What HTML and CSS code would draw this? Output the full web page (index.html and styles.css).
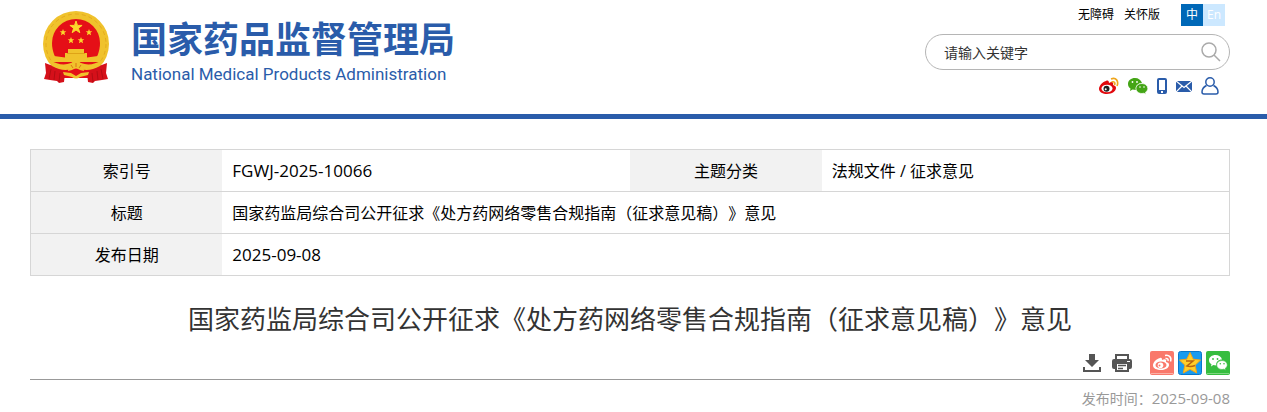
FILE: index.html
```html
<!DOCTYPE html>
<html lang="zh-CN">
  <head>
    <meta charset="utf-8">
    <meta name="viewport" content="width=device-width,initial-scale=1">
    <title>国家药监局综合司公开征求《处方药网络零售合规指南（征求意见稿）》意见</title>
    <link rel="stylesheet" href="styles.css">
  </head>
  <body>
    <header class="header">
      <div class="wrap header-inner">
        <a class="logo" href="#">
          <svg class="emblem" viewBox="0 0 66 72" aria-hidden="true">
            <circle cx="33" cy="33" r="33" fill="#f0c22c"/>
            <circle cx="33" cy="33" r="30" fill="none" stroke="#dfa51c" stroke-width=".8" stroke-dasharray="4 3"/>
            <path d="M33 8a24 24 0 0 1 24 24c0 8-3 15-7 20H16c-4-5-7-12-7-20A24 24 0 0 1 33 8z" fill="#e50f17"/>
            <path d="M33 10l1.500 4.400h4.600l-3.700 2.800 1.400 4.500-3.800-2.700-3.800 2.700 1.400-4.500-3.700-2.800h4.600z" fill="#fbd72b" stroke="#fbd72b"/>
            <g fill="#fbd72b">
              <path id="star" d="M20 18l.9 2.200 2.400.1-1.900 1.500.7 2.400-2.100-1.300-2.100 1.300.7-2.400-1.900-1.500 2.400-.1z"/>
              <use href="#star" x="26"/>
              <use href="#star" x="8" y="8"/>
              <use href="#star" x="18" y="8"/>
            </g>
            <path d="M25 38h16v4h3v5H22v-5h3z" fill="#f0c22c"/>
            <path d="M24 42.500h18" stroke="#d99a12" stroke-width=".8"/>
            <path d="M11 45q22 4 44 0l2 7H9z" fill="#f0c22c"/>
            <path d="M9 51h48v13l-10 3H19L9 64z" fill="#e50f17"/>
            <path d="M2 52l8 3 8 4 4 3-1 9-5 1-2-2-7-1-6-1 2-6zM64 52l-8 3-8 4-4 3 1 9 5 1 2-2 7-1 6-1-2-6z" fill="#d5101a"/>
            <path d="M7 49q11 7 21 3l5-3 5 3q10 4 21-3l-2 6q-11 6-19 3l-5-2-5 2q-8 3-19-3z" fill="#f0c22c"/>
            <path d="M25 60q0-9 8-9t8 9l-4-1q-4-3-8 0z" fill="#f0c22c"/>
            <path d="M30 57l-2-3M33 56v-4M36 57l2-3" stroke="#d9600f" stroke-width=".8"/>
            <path d="M20 61l8 1 5 3 5-3 8-1-1 3-8 2q-4 3-8 0l-8-2z" fill="#f0c22c"/>
            <path d="M8 58l-2 10M12 60l-1 9M17 62l-1 9M58 58l2 10M54 60l1 9M49 62l1 9" stroke="#a90b12" stroke-width=".8"/>
          </svg>
          <span class="logo-text">
            <span class="logo-cn">国家药品监督管理局</span>
            <span class="logo-en">National Medical Products Administration</span>
          </span>
        </a>
        <div class="tools">
          <nav class="top-links">
            <a href="#">无障碍</a>
            <a href="#">关怀版</a>
            <span class="lang"><a class="cn" href="#">中</a><a class="en" href="#">En</a></span>
          </nav>
          <form class="search">
            <input type="text" aria-label="请输入关键字" placeholder="请输入关键字">
            <button type="button" aria-label="搜索">
              <svg width="20" height="20" viewBox="0 0 20 20"><circle cx="8" cy="8" r="7" fill="none" stroke="#aaa" stroke-width="1.500"/><path d="M13 13l6 6" stroke="#aaa" stroke-width="1.500"/></svg>
            </button>
          </form>
          <div class="links">
            <a href="#" aria-label="微博">
              <svg width="20" height="18" viewBox="0 0 20 18">
                <path d="M7 4C3 5 0 9 0 12c0 3 4 5 8 5 5 0 9-3 9-6 0-2-1-2-3-3 1-3-1-4-4-2 0-2-1-3-3-2z" fill="#e1080d"/>
                <ellipse cx="8" cy="11.500" rx="5.500" ry="3.800" fill="#fff"/>
                <circle cx="7.500" cy="11.800" r="3" fill="#222"/><circle cx="6.700" cy="12.200" r="1" fill="#fff"/>
                <path d="M12 2c5-2 8 2 6 7M12.500 5c3-1 4 1 3 3" fill="none" stroke="#efa51b" stroke-width="1.600"/>
              </svg>
            </a>
            <a href="#" aria-label="微信">
              <svg width="20" height="18" viewBox="0 0 20 18">
                <path d="M7 1C3 1 0 3.500 0 7c0 2 1 3.500 2.500 4.500L2 14l2.500-1.500L8 13c-1-4 2-7 6-7-1-3-3.500-5-7-5z" fill="#44a516"/>
                <path d="M14 6.500c-3.500 0-6 2.200-6 5s2.500 5 6 5l2-.3 2 1-.5-2c1.500-1 2.300-2.200 2.300-3.700 0-2.800-2.500-5-5.800-5z" fill="#44a516" stroke="#fff" stroke-width=".7"/>
                <g fill="#fff"><circle cx="4.500" cy="5" r=".9"/><circle cx="9" cy="5" r=".9"/><circle cx="12" cy="10" r=".8"/><circle cx="16" cy="10" r=".8"/></g>
              </svg>
            </a>
            <a href="#" aria-label="手机">
              <svg width="10" height="18" viewBox="0 0 10 18"><path d="M2 1h6a2 2 0 0 1 2 2v12a2 2 0 0 1-2 2H2a2 2 0 0 1-2-2V3a2 2 0 0 1 2-2zm0 2v10h6V3zm2 11v2h2v-2z" fill="#2a5caa" fill-rule="evenodd"/></svg>
            </a>
            <a href="#" aria-label="邮箱">
              <svg width="16" height="18" viewBox="0 0 16 18"><path d="M0 4h16v11H0z" fill="#2a5caa"/><path d="M0 4l8 6.500L16 4M0 15l6-6M16 15l-6-6" fill="none" stroke="#fff" stroke-width="1.200"/></svg>
            </a>
            <a class="user" href="#" aria-label="个人中心">
              <svg width="18" height="18" viewBox="0 0 18 18"><circle cx="9" cy="5" r="4.200"/><path d="M5.500 8.500C2.500 10 1 12.500 1 15q0 2 2 2h12q2 0 2-2c0-2.500-1.500-5-4.500-6.500"/></svg>
            </a>
          </div>
        </div>
      </div>
    </header>
    <main class="wrap">
      <table class="info">
        <colgroup><col class="c-label"><col class="c-value"><col class="c-label"><col></colgroup>
        <tr>
          <th scope="row">索引号</th>
          <td class="num">FGWJ-2025-10066</td>
          <th scope="row">主题分类</th>
          <td>法规文件 / 征求意见</td>
        </tr>
        <tr>
          <th scope="row">标题</th>
          <td colspan="3">国家药监局综合司公开征求《处方药网络零售合规指南（征求意见稿）》意见</td>
        </tr>
        <tr>
          <th scope="row">发布日期</th>
          <td class="num" colspan="3">2025-09-08</td>
        </tr>
      </table>
      <h1>国家药监局综合司公开征求《处方药网络零售合规指南（征求意见稿）》意见</h1>
      <div class="share">
        <button type="button" aria-label="下载">
          <svg width="20" height="20" viewBox="0 0 20 20"><path d="M7 1h6v6h4l-7 7-7-7h4zM1 14h2v3h14v-3h2v5H1z" fill="#555"/></svg>
        </button>
        <button type="button" aria-label="打印">
          <svg width="20" height="20" viewBox="0 0 20 20"><path d="M3 1h14v5H3z" fill="#555"/><path d="M5 3h10v3H5z" fill="#fff"/><path d="M2 6h16q2 0 2 2v6q0 2-2 2h-1v3H3v-3H2q-2 0-2-2V8q0-2 2-2z" fill="#555"/><path d="M5 11h10v6H5z" fill="#fff"/><path d="M6 12.500h8M6 15.500h5" stroke="#555" stroke-width="1.300"/><path d="M15 8.500h3" stroke="#fff"/></svg>
        </button>
        <button class="first" type="button" aria-label="分享到微博">
          <svg width="24" height="24" viewBox="0 0 24 24">
            <rect width="24" height="24" rx="2" fill="#f9786b"/><path d="M1 22.500h22" stroke="#fbb0a6"/>
            <path d="M10 7c-4 1-7 4.500-7 7.500s4 4.500 8 4.500c5 0 8-2.500 8-5 0-2-1-2.500-3-3 1-2.500-1-3.500-4-2 0-2-.5-2.500-2-2z" fill="#fff"/>
            <ellipse cx="11" cy="14" rx="5.500" ry="3.600" fill="#f9786b"/><circle cx="10.500" cy="14.200" r="2.800" fill="#fff"/><circle cx="9.500" cy="14.600" r="1" fill="#f9786b"/>
            <path d="M15 4.500c4-1 7 2 5.500 6M15.500 7.500c2-.5 3 1 2.500 2.500" fill="none" stroke="#fff" stroke-width="1.500"/>
          </svg>
        </button>
        <button type="button" aria-label="分享到QQ空间">
          <svg width="24" height="24" viewBox="0 0 24 24">
            <rect x=".5" y=".5" width="23" height="23" rx="2" fill="#189bf0" stroke="#0877ca"/>
            <path d="M12 1.500l3.200 6.700 7.300.9-5.400 5.100L18.700 22 12 18.300 5.300 22l1.600-7.800L1.500 9.100l7.300-.9z" fill="#ffce29" stroke="#f3a51a" stroke-linejoin="round"/>
            <path d="M8 10h7l-6 5q4 1 8-.5" fill="none" stroke="#b86412" stroke-width="1.500"/>
          </svg>
        </button>
        <button type="button" aria-label="分享到微信">
          <svg width="24" height="24" viewBox="0 0 24 24">
            <rect width="24" height="24" rx="2" fill="#36bd3f"/><path d="M1 22.500h22" stroke="#7ed681"/>
            <path d="M9.500 4C6 4 3 6.200 3 9.200c0 1.800 1 3.200 2.500 4.100L5 15.500 7.300 14l3 .4c-.5-3.500 2-6 5.700-6C15.300 5.800 12.700 4 9.500 4z" fill="#fff"/>
            <path d="M16 9.500c-3 0-5.300 2-5.300 4.500s2.300 4.500 5.300 4.500l1.800-.3 1.900 1-.4-1.900c1.300-.8 2-2 2-3.300 0-2.500-2.300-4.500-5.300-4.500z" fill="#fff" stroke="#36bd3f" stroke-width=".6"/>
            <g fill="#36bd3f"><circle cx="7" cy="8" r=".9"/><circle cx="11.500" cy="8" r=".9"/><circle cx="14.300" cy="12.700" r=".8"/><circle cx="18" cy="12.700" r=".8"/></g>
          </svg>
        </button>
      </div>
      <p class="date">发布时间：<span>2025-09-08</span></p>
    </main>
  </body>
</html>
```
FILE: styles.css
```css
* {
  margin: 0;
  padding: 0;
  box-sizing: border-box;
}
body {
  background: #fff;
  color: #000;
  font-family: "Open Sans", "Noto Sans CJK SC", sans-serif;
  font-size: 16px;
  text-spacing-trim: space-all;
}
a {
  color: inherit;
  text-decoration: none;
}
button {
  border: 0;
  background: none;
  cursor: pointer;
}
svg {
  display: block;
}
.wrap {
  margin: 0 37px 0 30px;
}
.header {
  border-bottom: 5px solid #2a5caa;
}
.header-inner {
  display: flex;
  justify-content: space-between;
  min-height: 114px;
}
.logo {
  display: flex;
  align-items: flex-start;
  gap: 22px;
  padding: 11px 0 0 13px;
  color: #2a5caa;
}
.emblem {
  width: 66px;
  height: 72px;
}
.logo-text {
  display: flex;
  flex-direction: column;
  padding-top: 9px;
  white-space: nowrap;
}
.logo-cn {
  font-family: "Liberation Sans", "Noto Sans CJK SC", sans-serif;
  font-size: 36px;
  font-weight: bold;
  line-height: 42px;
}
.logo-en {
  font-family: Roboto, sans-serif;
  font-size: 17px;
  line-height: 24px;
}
.tools {
  width: 305px;
  padding-top: 4px;
}
.top-links {
  display: flex;
  justify-content: flex-end;
  gap: 10px;
  padding-right: 5px;
  font-size: 12px;
  line-height: 22px;
}
.lang {
  display: flex;
  margin-left: 11px;
  color: #fff;
  text-align: center;
}
.lang a {
  width: 22px;
}
.cn {
  background: #0068b7;
}
.en {
  background: #cce8ff;
}
.search {
  display: flex;
  align-items: center;
  height: 36px;
  margin-top: 8px;
  padding: 0 8px 0 18px;
  border: 1px solid #b5b5b5;
  border-radius: 18px;
}
.search input {
  flex: 1;
  min-width: 0;
  border: 0;
  outline: none;
  background: none;
  font: inherit;
  font-size: 14px;
}
.search input::placeholder {
  color: #333;
}
.links {
  display: flex;
  justify-content: flex-end;
  gap: 9px;
  margin-top: 7px;
  padding-right: 11px;
}
.user {
  fill: none;
  stroke: #2a5caa;
  stroke-width: 1.5;
}
.info {
  width: 100%;
  margin-top: 30px;
  table-layout: fixed;
  border-collapse: collapse;
  border: 1px solid #d6d6d6;
}
.c-label {
  width: 16%;
}
.c-value {
  width: 34%;
}
.info tr {
  height: 42px;
  border-bottom: 1px solid #d6d6d6;
}
.info th {
  background: #f2f2f2;
  font-weight: normal;
}
.info td {
  padding: 0 10px;
}
.info th, .info td {
  line-height: 24px;
}
.info .num {
  font-size: 17px;
}
h1 {
  margin-top: 23px;
  color: #333;
  font-size: 26px;
  font-weight: normal;
  line-height: 40px;
  text-align: center;
}
.share {
  display: flex;
  justify-content: flex-end;
  align-items: center;
  gap: 4px;
  margin-top: 12px;
  padding-bottom: 4px;
  border-bottom: 1px solid #999;
}
.share button:first-child {
  margin-right: 6px;
}
.share .first {
  margin-left: 14px;
}
.date {
  margin-top: 7px;
  color: #999;
  font-size: 14px;
  line-height: 22px;
  text-align: right;
}
.date span {
  font-size: 15px;
}
```
